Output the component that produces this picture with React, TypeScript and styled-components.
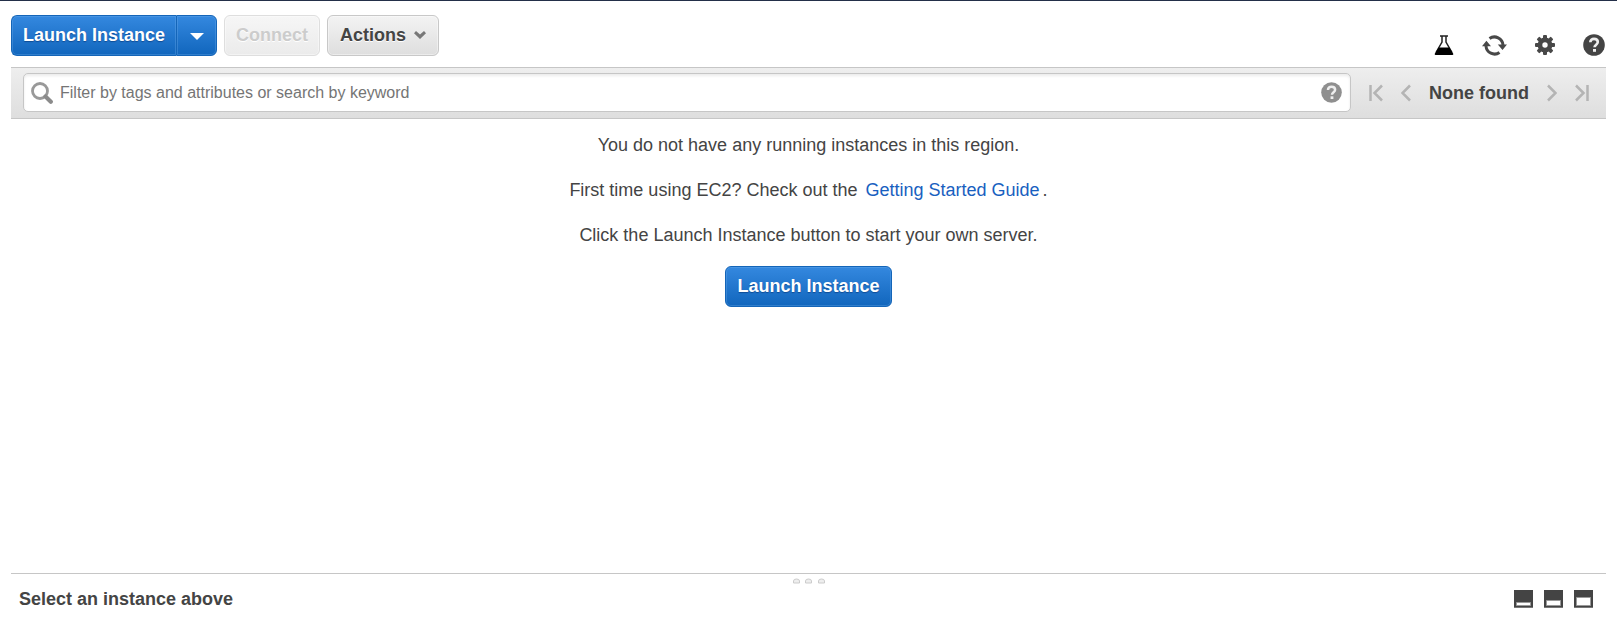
import React from "react";
import styled, { createGlobalStyle, css } from "styled-components";

const GlobalStyle = createGlobalStyle`
  *, *::before, *::after { box-sizing: border-box; }
  body {
    margin: 0;
    background: #fff;
    color: #444;
    font-family: "Liberation Sans", Arial, Helvetica, sans-serif;
    font-size: 18px;
    line-height: 21px;
  }
  button, input { font: inherit; }
  svg { display: block; flex: none; }
`;

const Page = styled.div`
  display: flex;
  flex-direction: column;
  min-height: 100vh;
  border-top: 1px solid #232f49;
  padding: 0 11px;
`;

const Toolbar = styled.header`
  display: flex;
  justify-content: space-between;
  align-items: flex-start;
  height: 66px;
  padding-top: 14px;
`;

const Actions = styled.div`
  display: flex;
  gap: 7px;
`;

const Split = styled.div`
  display: flex;
`;

const blue = css`
  color: #fff;
  border-color: #1465b8;
  background: linear-gradient(#3488df, #1166bd);
  box-shadow: inset 0 0 0 1px rgba(120, 180, 240, 0.3);
  text-shadow: 0 1px 1px rgba(0, 40, 100, 0.5);
`;

const gray = css`
  color: #444;
  border-color: #c8c8c8;
  background: linear-gradient(#f3f3f3, #dedede);
  box-shadow: inset 0 0 0 1px rgba(255, 255, 255, 0.4);
  text-shadow: 0 1px 0 #fff;
`;

const Button = styled.button<{ $primary?: boolean; $menu?: boolean; $join?: "left" | "right" }>`
  display: flex;
  align-items: center;
  justify-content: center;
  gap: 8px;
  height: 41px;
  padding: 0 ${(p) => (p.$menu ? 12 : 11)}px;
  border: 1px solid;
  border-radius: 6px;
  font-weight: bold;
  white-space: nowrap;
  cursor: pointer;
  ${(p) => (p.$primary ? blue : gray)}
  ${(p) => p.$join === "left" && css`border-radius: 6px 0 0 6px; border-right: 0;`}
  ${(p) => p.$join === "right" && css`width: 41px; border-radius: 0 6px 6px 0;`}
  &:disabled {
    color: #ccc;
    border-color: #dedede;
    background: linear-gradient(#f6f6f6, #ebebeb);
    cursor: default;
  }
`;

const Tools = styled.div`
  display: flex;
  align-items: center;
  gap: 28px;
  padding: 19px 1px 0 0;
`;

const IconButton = styled.button`
  display: flex;
  padding: 0;
  border: 0;
  color: inherit;
  background: none;
  cursor: pointer;
`;

const FilterBar = styled.div`
  display: flex;
  align-items: center;
  height: 52px;
  padding: 5px 17px 6px 12px;
  border: solid #c6c6c6;
  border-width: 1px 0;
  background: linear-gradient(#eee, #dedede);
`;

const SearchBox = styled.label`
  display: flex;
  flex: 1;
  align-items: center;
  gap: 7px;
  height: 39px;
  padding: 0 8px 0 7px;
  border: 1px solid #c6c6c6;
  border-radius: 5px;
  color: #8f8f8f;
  background: #fff;
  box-shadow: inset 0 2px 3px rgba(0, 0, 0, 0.08);
`;

const SearchInput = styled.input`
  flex: 1;
  min-width: 0;
  padding: 0;
  border: 0;
  outline: 0;
  color: #444;
  background: none;
  font-size: 16px;
  &::placeholder { color: #757575; opacity: 1; }
`;

const Pager = styled.nav`
  display: flex;
  align-items: center;
  gap: 18px;
  margin-left: 18px;
  padding-top: 1px;
  color: #b4b4b4;
`;

const PagerText = styled.span`
  color: #444;
  font-weight: bold;
  white-space: nowrap;
`;

const Empty = styled.main`
  display: flex;
  flex: 1;
  flex-direction: column;
  align-items: center;
  gap: 24px;
  padding: 16px 0 24px;
  text-align: center;
`;

const Line = styled.p`
  margin: 0;
`;

const Guide = styled.a`
  margin: 0 3px;
  color: #1860bf;
  text-decoration: none;
`;

const Launch = styled.div`
  margin-top: -4px;
`;

const Details = styled.footer`
  position: relative;
  display: flex;
  align-items: flex-start;
  justify-content: space-between;
  height: 60px;
  padding: 15px 13px 0 8px;
  border-top: 1px solid #c6c6c6;
`;

const Title = styled.h2`
  margin: 0;
  font-size: 18px;
`;

const Grip = styled.div`
  position: absolute;
  top: 4px;
  left: 50%;
  transform: translateX(-50%);
`;

const Layouts = styled.div`
  display: flex;
  gap: 11px;
  padding-top: 1px;
`;

function Help({ size }: { size: number }) {
  return (
    <svg width={size} height={size} viewBox="0 0 22 22" aria-hidden="true">
      <circle cx="11" cy="11" r="10.8" fill="currentColor" />
      <path d="M7.3 8.3C7.3 5.9 8.9 4.9 11 4.9s3.8 1.2 3.8 3.2c0 2.5-3.3 2.6-3.3 5.2" fill="none" stroke="#eee" strokeWidth="2.6" />
      <path d="M10 15h3v2.8h-3z" fill="#eee" />
    </svg>
  );
}

function Flask() {
  return (
    <svg width="20" height="20" viewBox="0 0 20 20" aria-hidden="true">
      <path d="M6 1h8M8 1v6L2 17.5M12 1v6l6 10.5" fill="none" stroke="#222" strokeWidth="1.5" />
      <path d="M4.6 12.5h10.8l4 6.5q-.2 1-1 1H1.6q-.8 0-1-1z" fill="#000" />
    </svg>
  );
}

function Refresh() {
  return (
    <svg width="25" height="21" viewBox="0 0 25 21" aria-hidden="true">
      <path d="M7.5 3.5A8.6 8.6 0 0 1 21 10M17.5 17.5A8.6 8.6 0 0 1 4 11" fill="none" stroke="#484848" strokeWidth="3" />
      <path d="M15.8 9.5H25L20.5 15zM0 11.2h9L4.4 5.8z" fill="#484848" />
    </svg>
  );
}

function Gear() {
  return (
    <svg width="20" height="20" viewBox="0 0 20 20" aria-hidden="true">
      <g fill="#484848">
        {[0, 45, 90, 135].map((angle) => (
          <rect key={angle} x="8" y="0" width="4" height="20" rx="1" transform={`rotate(${angle} 10 10)`} />
        ))}
        <circle cx="10" cy="10" r="7.4" />
      </g>
      <circle cx="10" cy="10" r="2.7" fill="#fff" />
    </svg>
  );
}

function Magnifier() {
  return (
    <svg width="22" height="22" viewBox="0 0 22 22" aria-hidden="true">
      <circle cx="9" cy="9" r="7.5" fill="none" stroke="#999" strokeWidth="2.8" />
      <path d="M14.5 14.5l5.3 5.2" stroke="#8b8b8b" strokeWidth="4.2" strokeLinecap="round" />
    </svg>
  );
}

function PageArrow({ end, flip }: { end?: boolean; flip?: boolean }) {
  const width = end ? 14 : 10;
  return (
    <svg width={width} height="18" viewBox={`0 0 ${width} 18`} aria-hidden="true">
      <g fill="none" stroke="currentColor" strokeWidth="2.5" transform={flip ? `translate(${width} 0) scale(-1 1)` : undefined}>
        <path d={end ? "M13 1.5L5.5 9l7.5 7.5M1.5 1v16" : "M9 1.5L1.5 9 9 16.5"} />
      </g>
    </svg>
  );
}

function LayoutIcon({ top }: { top: number }) {
  return (
    <svg width="19" height="18" viewBox="0 0 19 18" aria-hidden="true">
      <path d="M0 0h19v18H0z" fill="#444" />
      <path d="M0 17h19v1H0z" fill="#777" />
      <path d={`M2.5 ${top}h14V15.5h-14z`} fill="#fff" stroke="#999" />
    </svg>
  );
}

export default function App() {
  return (
    <>
      <GlobalStyle />
      <Page>
        <Toolbar>
          <Actions>
            <Split>
              <Button $primary $join="left">Launch Instance</Button>
              <Button $primary $join="right" aria-label="More launch options">
                <svg width="14" height="8" viewBox="0 0 14 8" aria-hidden="true">
                  <path d="M0 1h14L7 8z" fill="#fff" />
                </svg>
              </Button>
            </Split>
            <Button disabled>Connect</Button>
            <Button $menu>
              Actions
              <svg width="12" height="10" viewBox="0 0 12 10" aria-hidden="true">
                <path d="M2 0l4 3.5L10 0l2 2.2L6 8 0 2.2z" fill="#777" />
              </svg>
            </Button>
          </Actions>
          <Tools>
            <IconButton aria-label="Experiments"><Flask /></IconButton>
            <IconButton aria-label="Refresh"><Refresh /></IconButton>
            <IconButton aria-label="Settings"><Gear /></IconButton>
            <IconButton aria-label="Help"><Help size={22} /></IconButton>
          </Tools>
        </Toolbar>
        <FilterBar>
          <SearchBox>
            <Magnifier />
            <SearchInput type="text" aria-label="Filter instances" placeholder="Filter by tags and attributes or search by keyword" />
            <IconButton type="button" aria-label="Search help"><Help size={21} /></IconButton>
          </SearchBox>
          <Pager aria-label="Pagination">
            <IconButton aria-label="First page"><PageArrow end /></IconButton>
            <IconButton aria-label="Previous page"><PageArrow /></IconButton>
            <PagerText>None found</PagerText>
            <IconButton aria-label="Next page"><PageArrow flip /></IconButton>
            <IconButton aria-label="Last page"><PageArrow end flip /></IconButton>
          </Pager>
        </FilterBar>
        <Empty>
          <Line>You do not have any running instances in this region.</Line>
          <Line>
            First time using EC2? Check out the <Guide href="#guide">Getting Started Guide</Guide>.
          </Line>
          <Line>Click the Launch Instance button to start your own server.</Line>
          <Launch>
            <Button $primary>Launch Instance</Button>
          </Launch>
        </Empty>
        <Details>
          <Title>Select an instance above</Title>
          <Grip>
            <svg width="32" height="6" viewBox="0 0 32 6" aria-hidden="true">
              {[0, 12, 25].map((x) => (
                <path key={x} d={`M${x + 0.5} 5V3q0-2 3-2t3 2v2z`} fill="#eee" stroke="#ccc" />
              ))}
            </svg>
          </Grip>
          <Layouts>
            <IconButton aria-label="Collapse details"><LayoutIcon top={12.5} /></IconButton>
            <IconButton aria-label="Split details"><LayoutIcon top={10.5} /></IconButton>
            <IconButton aria-label="Expand details"><LayoutIcon top={7.5} /></IconButton>
          </Layouts>
        </Details>
      </Page>
    </>
  );
}
